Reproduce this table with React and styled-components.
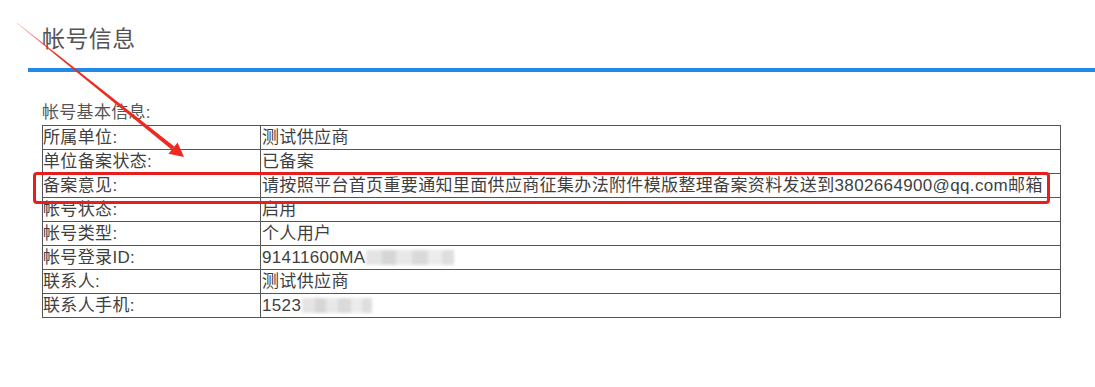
import React from 'react';
import styled, { createGlobalStyle } from 'styled-components';

const GlobalStyle = createGlobalStyle`
  html, body {
    margin: 0;
    padding: 0;
    background: #fff;
  }
  body {
    font-family: "Liberation Sans", "Noto Sans CJK SC", sans-serif;
    color: #444;
  }
`;

const rows = [
  { label: '所属单位:', value: '测试供应商' },
  { label: '单位备案状态:', value: '已备案' },
  { label: '备案意见:', value: '请按照平台首页重要通知里面供应商征集办法附件模版整理备案资料发送到3802664900@qq.com邮箱' },
  { label: '帐号状态:', value: '启用' },
  { label: '帐号类型:', value: '个人用户' },
  { label: '帐号登录ID:', value: '91411600MA', masked: 88 },
  { label: '联系人:', value: '测试供应商' },
  { label: '联系人手机:', value: '1523', masked: 70 },
];

const Page = styled.div`
  position: relative;
  width: 1095px;
  height: 387px;
  overflow: hidden;
  padding-left: 28px;
  box-sizing: border-box;
`;

const Header = styled.div`
  height: 68px;
  display: flex;
  align-items: center;
  padding-left: 14px;
  border-bottom: 4px solid #2189e6;
  box-sizing: content-box;
`;

const Title = styled.h1`
  margin: 0;
  font-size: 23px;
  font-weight: normal;
  color: #555;
  letter-spacing: 0.4px;
  position: relative;
  top: 3px;
`;

const Section = styled.div`
  position: relative;
  margin-top: 29px;
  padding-left: 14px;
  width: 1019px;
`;

const Caption = styled.div`
  font-size: 17px;
  line-height: 24px;
  color: #555;
  letter-spacing: 0.3px;
`;

const InfoTable = styled.table`
  width: 1019px;
  border-collapse: collapse;
  table-layout: fixed;
  font-size: 17px;
  color: #3f3f3f;
  letter-spacing: 0.35px;
`;

const Cell = styled.td`
  border: 1px solid #555;
  height: 23px;
  padding: 0 0 0 ${p => (p.$value ? 1 : 0)}px;
  line-height: 22px;
  white-space: nowrap;
  overflow: visible;
  vertical-align: middle;
`;

const Mask = styled.span`
  display: inline-block;
  width: ${p => p.$w}px;
  height: 15px;
  vertical-align: -2px;
  margin-left: 1px;
  background:
    linear-gradient(90deg, #e4e4e4 0 18%, #d6d6d6 18% 34%, #e8e8e8 34% 52%, #dadada 52% 70%, #ececec 70% 86%, #dedede 86% 100%);
  filter: blur(1.5px);
`;

const Highlight = styled.div`
  position: absolute;
  left: 5px;
  top: 71px;
  width: 1011px;
  height: 26px;
  border: 3px solid #e61f1c;
  border-radius: 4px;
  pointer-events: none;
`;

const ArrowLayer = styled.svg`
  position: absolute;
  left: 0;
  top: 0;
  pointer-events: none;
`;

// annotation arrow, tapering from the tail to the head
function Arrow() {
  return (
    <ArrowLayer width="1095" height="387" viewBox="0 0 1095 387">
      <defs>
        <linearGradient id="tail" x1="17" y1="23" x2="173" y2="148" gradientUnits="userSpaceOnUse">
          <stop offset="0" stopColor="#f04a40" stopOpacity="0.35" />
          <stop offset="0.25" stopColor="#ee2a20" />
          <stop offset="1" stopColor="#ee2a20" />
        </linearGradient>
      </defs>
      <polygon
        points="16.8,23.3 17.2,22.7 174.3,146.6 171.8,149.7"
        fill="url(#tail)"
      />
      <polygon points="184,157 168.5,153.8 177.6,142.4" fill="#ee2a20" />
    </ArrowLayer>
  );
}

export default function App() {
  return (
    <>
      <GlobalStyle />
      <Page>
        <Header>
          <Title>帐号信息</Title>
        </Header>
        <Section>
          <Caption>帐号基本信息:</Caption>
          <InfoTable>
            <colgroup>
              <col style={{ width: '218px' }} />
              <col />
            </colgroup>
            <tbody>
              {rows.map(r => (
                <tr key={r.label}>
                  <Cell>{r.label}</Cell>
                  <Cell $value>
                    {r.value}
                    {r.masked ? <Mask $w={r.masked} /> : null}
                  </Cell>
                </tr>
              ))}
            </tbody>
          </InfoTable>
          <Highlight />
        </Section>
        <Arrow />
      </Page>
    </>
  );
}
